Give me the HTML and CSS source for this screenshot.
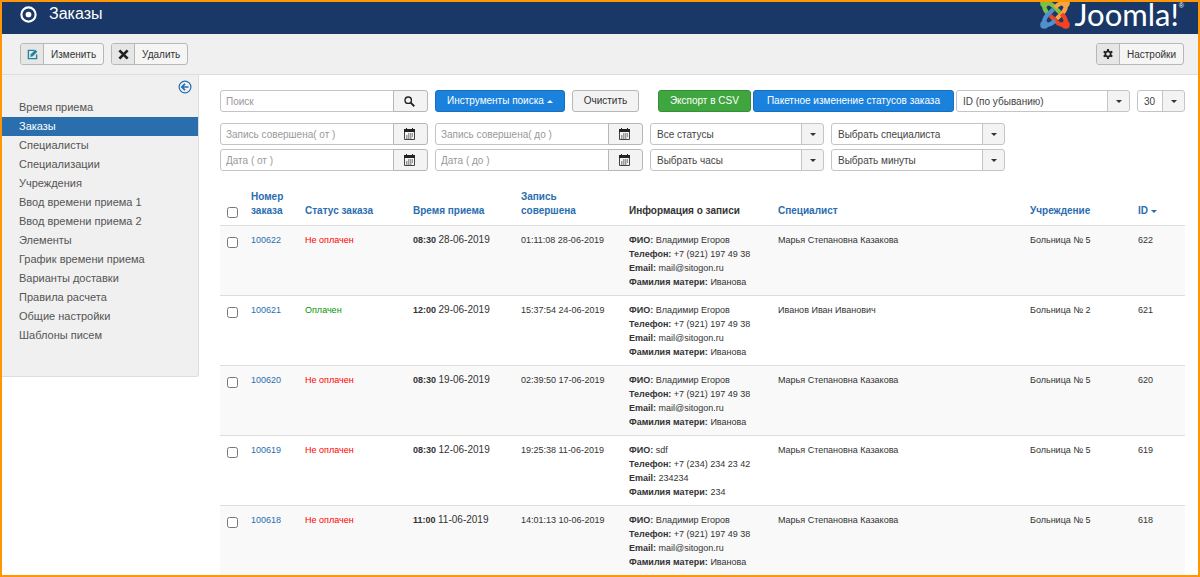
FILE: index.html
```
<!DOCTYPE html>
<html lang="ru">

<head>
  <meta charset="utf-8" />
  <meta name="viewport" content="width=device-width,initial-scale=1.0" />
  <title>Заказы</title>
  <link rel="stylesheet" href="styles.css">
</head>

<body>
  <div class="page">
    <header class="header">
      <svg class="header-icon" viewBox="0 0 16 16">
        <circle cx="8" cy="8" r="6.7" fill="none" stroke="#fff" stroke-width="2" />
        <circle cx="8" cy="8" r="2.7" fill="#fff" />
      </svg>
      <h1 class="title">Заказы</h1>
      <a class="logo" href="#">
        <svg class="logo-mark" viewBox="0 0 28 28">
          <defs>
            <g id="arm">
              <circle cx="4" cy="4" r="3.8" stroke="none" />
              <path d="M4 4C8 3.500 10.500 4.500 12.500 6.500L18.500 12.500M4 4C3.500 8 4.500 10.500 6.500 12.500L8 14" fill="none" stroke-width="4" />
            </g>
          </defs>
          <use href="#arm" fill="#7ac143" stroke="#7ac143" />
          <use href="#arm" fill="#f9a541" stroke="#f9a541" transform="rotate(90 14 14)" />
          <use href="#arm" fill="#f44321" stroke="#f44321" transform="rotate(180 14 14)" />
          <use href="#arm" fill="#5091cd" stroke="#5091cd" transform="rotate(270 14 14)" />
        </svg>
        <span class="logo-text">Joomla!</span><sup class="logo-reg">®</sup>
      </a>
    </header>

    <div class="toolbar">
      <button class="tool-btn" type="button">
        <span class="tool-icon">
          <svg viewBox="0 0 16 16" width="11" height="11" fill="none" stroke="#2384a0" stroke-width="2">
            <path d="M11 2H2v12h12V8" />
            <path d="M4.500 11.500l1-4L12 1l3 3-6.500 6.500z" fill="#2384a0" stroke="none" />
          </svg>
        </span>
        <span class="tool-text">Изменить</span>
      </button>
      <button class="tool-btn" type="button">
        <span class="tool-icon">
          <svg viewBox="0 0 16 16" width="11" height="11" stroke="#222" stroke-width="4">
            <path d="M2 2l12 12M14 2L2 14" />
          </svg>
        </span>
        <span class="tool-text">Удалить</span>
      </button>
      <button class="tool-btn tool-options" type="button">
        <span class="tool-icon">
          <svg viewBox="0 0 16 16" width="10" height="10" fill="none" stroke="#222">
            <circle cx="8" cy="8" r="4.300" stroke-width="2.800" />
            <path d="M8 0v3M8 13v3M1 4l2.600 1.500M12.400 10.500L15 12M1 12l2.600-1.500M12.400 5.500L15 4" stroke-width="3.200" />
          </svg>
        </span>
        <span class="tool-text">Настройки</span>
      </button>
    </div>

    <div class="main">
      <nav class="sidebar">
        <button class="collapse" type="button" aria-label="Скрыть меню">
          <svg viewBox="0 0 14 14" width="14" height="14" fill="none" stroke="#1f6fb5">
            <circle cx="7" cy="7" r="5.900" stroke-width="1.200" />
            <path d="M10.500 7H4M7 3.800L3.800 7 7 10.200" stroke-width="1.700" />
          </svg>
        </button>
        <ul class="menu">
          <li><a href="#">Время приема</a></li>
          <li class="active"><a href="#">Заказы</a></li>
          <li><a href="#">Специалисты</a></li>
          <li><a href="#">Специализации</a></li>
          <li><a href="#">Учреждения</a></li>
          <li><a href="#">Ввод времени приема 1</a></li>
          <li><a href="#">Ввод времени приема 2</a></li>
          <li><a href="#">Элементы</a></li>
          <li><a href="#">График времени приема</a></li>
          <li><a href="#">Варианты доставки</a></li>
          <li><a href="#">Правила расчета</a></li>
          <li><a href="#">Общие настройки</a></li>
          <li><a href="#">Шаблоны писем</a></li>
        </ul>
      </nav>

      <main class="content">
        <svg width="0" height="0" class="sprite">
          <symbol id="calendar" viewBox="0 0 11 12">
            <path d="M0 1h11v3H0z" fill="#222" />
            <path d="M2.500 0v2M8.500 0v2" stroke="#222" />
            <path d="M.5 4v7.500h10V4" fill="none" stroke="#444" />
            <path d="M4 6h5M2 8h7M2 10h6" stroke="#444" stroke-width="1.200" stroke-dasharray="1.400 .5" />
          </symbol>
        </svg>
        <form class="filters">
          <div class="filter-bar">
            <div class="field">
              <input type="text" placeholder="Поиск" aria-label="Поиск">
              <button type="button" aria-label="Найти">
                <svg viewBox="0 0 12 12" width="11" height="11" fill="none" stroke="#222">
                  <circle cx="4.600" cy="4.600" r="3.500" stroke-width="1.500" />
                  <path d="M7 7l4.200 4.200" stroke-width="2" />
                </svg>
              </button>
            </div>
            <button class="btn btn-primary" type="button">Инструменты поиска <i class="caret caret-up"></i></button>
            <button class="btn" type="button">Очистить</button>
            <div class="filter-right">
              <button class="btn btn-success" type="button">Экспорт в CSV</button>
              <button class="btn btn-primary btn-wide" type="button">Пакетное изменение статусов заказа</button>
              <div class="select">
                <select aria-label="Сортировка">
                  <option>ID (по убыванию)</option>
                </select>
              </div>
              <div class="select select-limit">
                <select aria-label="Количество">
                  <option>30</option>
                </select>
              </div>
            </div>
          </div>
          <div class="filter-row">
            <div class="field">
              <input type="text" placeholder="Запись совершена( от )" aria-label="Запись совершена от">
              <button type="button" aria-label="Календарь"><svg width="11" height="12"><use href="#calendar" /></svg></button>
            </div>
            <div class="field">
              <input type="text" placeholder="Запись совершена( до )" aria-label="Запись совершена до">
              <button type="button" aria-label="Календарь"><svg width="11" height="12"><use href="#calendar" /></svg></button>
            </div>
            <div class="select">
              <select aria-label="Статус">
                <option>Все статусы</option>
              </select>
            </div>
            <div class="select">
              <select aria-label="Специалист">
                <option>Выбрать специалиста</option>
              </select>
            </div>
          </div>
          <div class="filter-row">
            <div class="field">
              <input type="text" placeholder="Дата ( от )" aria-label="Дата от">
              <button type="button" aria-label="Календарь"><svg width="11" height="12"><use href="#calendar" /></svg></button>
            </div>
            <div class="field">
              <input type="text" placeholder="Дата ( до )" aria-label="Дата до">
              <button type="button" aria-label="Календарь"><svg width="11" height="12"><use href="#calendar" /></svg></button>
            </div>
            <div class="select">
              <select aria-label="Часы">
                <option>Выбрать часы</option>
              </select>
            </div>
            <div class="select">
              <select aria-label="Минуты">
                <option>Выбрать минуты</option>
              </select>
            </div>
          </div>
        </form>

        <table class="orders">
          <colgroup>
            <col class="col-check">
            <col class="col-number">
            <col class="col-mid">
            <col class="col-mid">
            <col class="col-mid">
            <col class="col-info">
            <col>
            <col class="col-mid">
            <col class="col-id">
          </colgroup>
          <thead>
            <tr>
              <th><input type="checkbox" aria-label="Выбрать все"></th>
              <th><a href="#">Номер заказа</a></th>
              <th><a href="#">Статус заказа</a></th>
              <th><a href="#">Время приема</a></th>
              <th><a href="#">Запись<br>совершена</a></th>
              <th>Информация о записи</th>
              <th><a href="#">Специалист</a></th>
              <th><a href="#">Учреждение</a></th>
              <th><a href="#">ID <i class="caret"></i></a></th>
            </tr>
          </thead>
          <tbody>
            <tr>
              <td><input type="checkbox" aria-label="Заказ 100622"></td>
              <td><a href="#">100622</a></td>
              <td class="unpaid">Не оплачен</td>
              <td><b>08:30</b> <span class="date">28-06-2019</span></td>
              <td>01:11:08 28-06-2019</td>
              <td><b>ФИО:</b> Владимир Егоров<br><b>Телефон:</b> +7 (921) 197 49 38<br><b>Email:</b> mail@sitogon.ru<br><b>Фамилия матери:</b> Иванова</td>
              <td>Марья Степановна Казакова</td>
              <td>Больница № 5</td>
              <td>622</td>
            </tr>
            <tr>
              <td><input type="checkbox" aria-label="Заказ 100621"></td>
              <td><a href="#">100621</a></td>
              <td class="paid">Оплачен</td>
              <td><b>12:00</b> <span class="date">29-06-2019</span></td>
              <td>15:37:54 24-06-2019</td>
              <td><b>ФИО:</b> Владимир Егоров<br><b>Телефон:</b> +7 (921) 197 49 38<br><b>Email:</b> mail@sitogon.ru<br><b>Фамилия матери:</b> Иванова</td>
              <td>Иванов Иван Иванович</td>
              <td>Больница № 2</td>
              <td>621</td>
            </tr>
            <tr>
              <td><input type="checkbox" aria-label="Заказ 100620"></td>
              <td><a href="#">100620</a></td>
              <td class="unpaid">Не оплачен</td>
              <td><b>08:30</b> <span class="date">19-06-2019</span></td>
              <td>02:39:50 17-06-2019</td>
              <td><b>ФИО:</b> Владимир Егоров<br><b>Телефон:</b> +7 (921) 197 49 38<br><b>Email:</b> mail@sitogon.ru<br><b>Фамилия матери:</b> Иванова</td>
              <td>Марья Степановна Казакова</td>
              <td>Больница № 5</td>
              <td>620</td>
            </tr>
            <tr>
              <td><input type="checkbox" aria-label="Заказ 100619"></td>
              <td><a href="#">100619</a></td>
              <td class="unpaid">Не оплачен</td>
              <td><b>08:30</b> <span class="date">12-06-2019</span></td>
              <td>19:25:38 11-06-2019</td>
              <td><b>ФИО:</b> sdf<br><b>Телефон:</b> +7 (234) 234 23 42<br><b>Email:</b> 234234<br><b>Фамилия матери:</b> 234</td>
              <td>Марья Степановна Казакова</td>
              <td>Больница № 5</td>
              <td>619</td>
            </tr>
            <tr>
              <td><input type="checkbox" aria-label="Заказ 100618"></td>
              <td><a href="#">100618</a></td>
              <td class="unpaid">Не оплачен</td>
              <td><b>11:00</b> <span class="date">11-06-2019</span></td>
              <td>14:01:13 10-06-2019</td>
              <td><b>ФИО:</b> Владимир Егоров<br><b>Телефон:</b> +7 (921) 197 49 38<br><b>Email:</b> mail@sitogon.ru<br><b>Фамилия матери:</b> Иванова</td>
              <td>Марья Степановна Казакова</td>
              <td>Больница № 5</td>
              <td>618</td>
            </tr>
          </tbody>
        </table>
      </main>
    </div>
  </div>
</body>

</html>
```
FILE: styles.css
```
* {
  box-sizing: border-box;
}

body {
  margin: 0;
  font-family: "Liberation Sans", Arial, sans-serif;
  font-size: 10px;
  color: #333;
  background: #fff;
}

button,
input,
select {
  margin: 0;
  font-family: inherit;
  font-size: 10px;
}

a {
  color: #2a6db0;
  text-decoration: none;
}

.page {
  height: 100vh;
  border: 2px solid #ff9705;
  overflow: hidden;
}

/* header */
.header {
  display: flex;
  align-items: center;
  height: 32px;
  padding: 0 14px 8px 18px;
  background: #1a3867;
}

.header-icon {
  width: 17px;
  height: 17px;
}

.title {
  margin: 0 auto 0 12px;
  font-size: 16px;
  font-weight: normal;
  line-height: 24px;
  color: #fff;
}

.logo {
  display: flex;
  align-items: center;
  color: #fff;
}

.logo-mark {
  width: 30px;
  height: 30px;
  margin-right: 5px;
}

.logo-text {
  font-family: Lato, sans-serif;
  font-size: 31px;
  line-height: 24px;
}

.logo-reg {
  align-self: flex-start;
  font-size: 7px;
  line-height: 14px;
}

/* toolbar */
.toolbar {
  display: flex;
  gap: 7px;
  padding: 9px 14px 9px 18px;
  background: #f0f0f0;
  border-bottom: 1px solid #ddd;
}

.tool-btn {
  display: flex;
  height: 22px;
  padding: 0;
  color: #333;
  background: #f5f5f5;
  border: 1px solid #b7b7b7;
  border-radius: 3px;
  overflow: hidden;
}

.tool-options {
  margin-left: auto;
}

.tool-icon {
  display: flex;
  align-items: center;
  justify-content: center;
  width: 23px;
  height: 20px;
  background: #e6e6e6;
  border-right: 1px solid #b7b7b7;
}

.tool-text {
  padding: 0 7px;
  line-height: 22px;
}

.main {
  display: flex;
  align-items: flex-start;
}

/* sidebar */
.sidebar {
  flex: none;
  width: 197px;
  padding: 5px 0 31px;
  background: #f0f0f0;
  border: 1px solid #ddd;
  border-width: 0 1px 1px 0;
  border-radius: 0 0 3px 0;
}

.collapse {
  display: block;
  margin: 0 6px 4px auto;
  padding: 0;
  border: 0;
  background: none;
}

.collapse svg {
  display: block;
}

.menu {
  margin: 0;
  padding: 0;
  list-style: none;
}

.menu a {
  display: block;
  padding-left: 17px;
  font-size: 11px;
  line-height: 19px;
  color: #555;
}

.menu .active a {
  color: #fff;
  background: #2a6ead;
}

/* filters */
.content {
  flex: 1;
  min-width: 0;
  padding: 15px 13px 0 21px;
}

.sprite {
  display: none;
}

.filters {
  display: flex;
  flex-direction: column;
  gap: 4px;
}

.filter-bar,
.filter-row {
  display: flex;
  gap: 7px;
}

.filter-bar {
  margin-bottom: 7px;
}

.filter-right {
  display: flex;
  gap: 2px;
  margin-left: auto;
}

.field {
  display: flex;
  width: 208px;
  height: 22px;
}

.field input {
  flex: 1;
  min-width: 0;
  padding: 0 5px;
  color: #555;
  border: 1px solid #c4c4c4;
  border-radius: 3px 0 0 3px;
}

.field input::placeholder {
  color: #999;
}

.field button {
  display: flex;
  align-items: center;
  justify-content: center;
  width: 35px;
  margin-left: -1px;
  padding: 0 3px 0 0;
  background: #f3f3f3;
  border: 1px solid #b7b7b7;
  border-radius: 0 3px 3px 0;
}

.btn {
  height: 22px;
  padding: 0 11px;
  line-height: 20px;
  color: #333;
  background: #f3f3f3;
  border: 1px solid #b7b7b7;
  border-radius: 3px;
}

.btn-primary {
  color: #fff;
  background: #1a82dc;
  border-color: #166fbc;
}

.btn-success {
  color: #fff;
  background: #3fa63f;
  border-color: #368e36;
}

.btn-wide {
  padding: 0 13px;
}

.caret {
  display: inline-block;
  border: 3px solid transparent;
  border-top-color: currentColor;
  border-bottom: 0;
  vertical-align: middle;
}

.caret-up {
  border-top: 0;
  border-bottom: 3px solid currentColor;
}

.select {
  position: relative;
  width: 174px;
  height: 22px;
}

.select select {
  width: 100%;
  height: 22px;
  padding: 0 24px 0 6px;
  color: #444;
  background: linear-gradient(#f3f3f3, #f3f3f3) right / 21px 100% no-repeat #fff;
  border: 1px solid #c4c4c4;
  border-radius: 3px;
  appearance: none;
}

.select::before {
  content: "";
  position: absolute;
  top: 1px;
  right: 22px;
  bottom: 1px;
  border-left: 1px solid #c4c4c4;
}

.select::after {
  content: "";
  position: absolute;
  top: 10px;
  right: 8px;
  border: 3px solid transparent;
  border-top-color: #333;
  border-bottom: 0;
  pointer-events: none;
}

.select-limit {
  width: 48px;
  margin-left: 5px;
}

/* orders table */
.orders {
  width: 100%;
  margin-top: 19px;
  table-layout: fixed;
  border-collapse: collapse;
  font-size: 9px;
  line-height: 14px;
}

.col-check {
  width: 26px;
}

.col-number {
  width: 54px;
}

.col-mid {
  width: 108px;
}

.col-info {
  width: 149px;
}

.col-id {
  width: 52px;
}

.orders th,
.orders td {
  padding: 7px 5px 6px;
  text-align: left;
  vertical-align: top;
}

.orders th {
  padding: 0 5px 7px;
  font-size: 10px;
  vertical-align: bottom;
}

.orders td {
  border-top: 1px solid #ddd;
}

.orders tbody tr:nth-child(odd) td {
  background: #f9f9f9;
}

.orders input {
  display: block;
  width: 11px;
  height: 11px;
  margin: 0 0 0 2px;
}

.orders td input {
  margin-top: 4px;
}

.date {
  font-size: 10px;
}

.unpaid {
  color: #f00;
}

.paid {
  color: #090;
}
```
